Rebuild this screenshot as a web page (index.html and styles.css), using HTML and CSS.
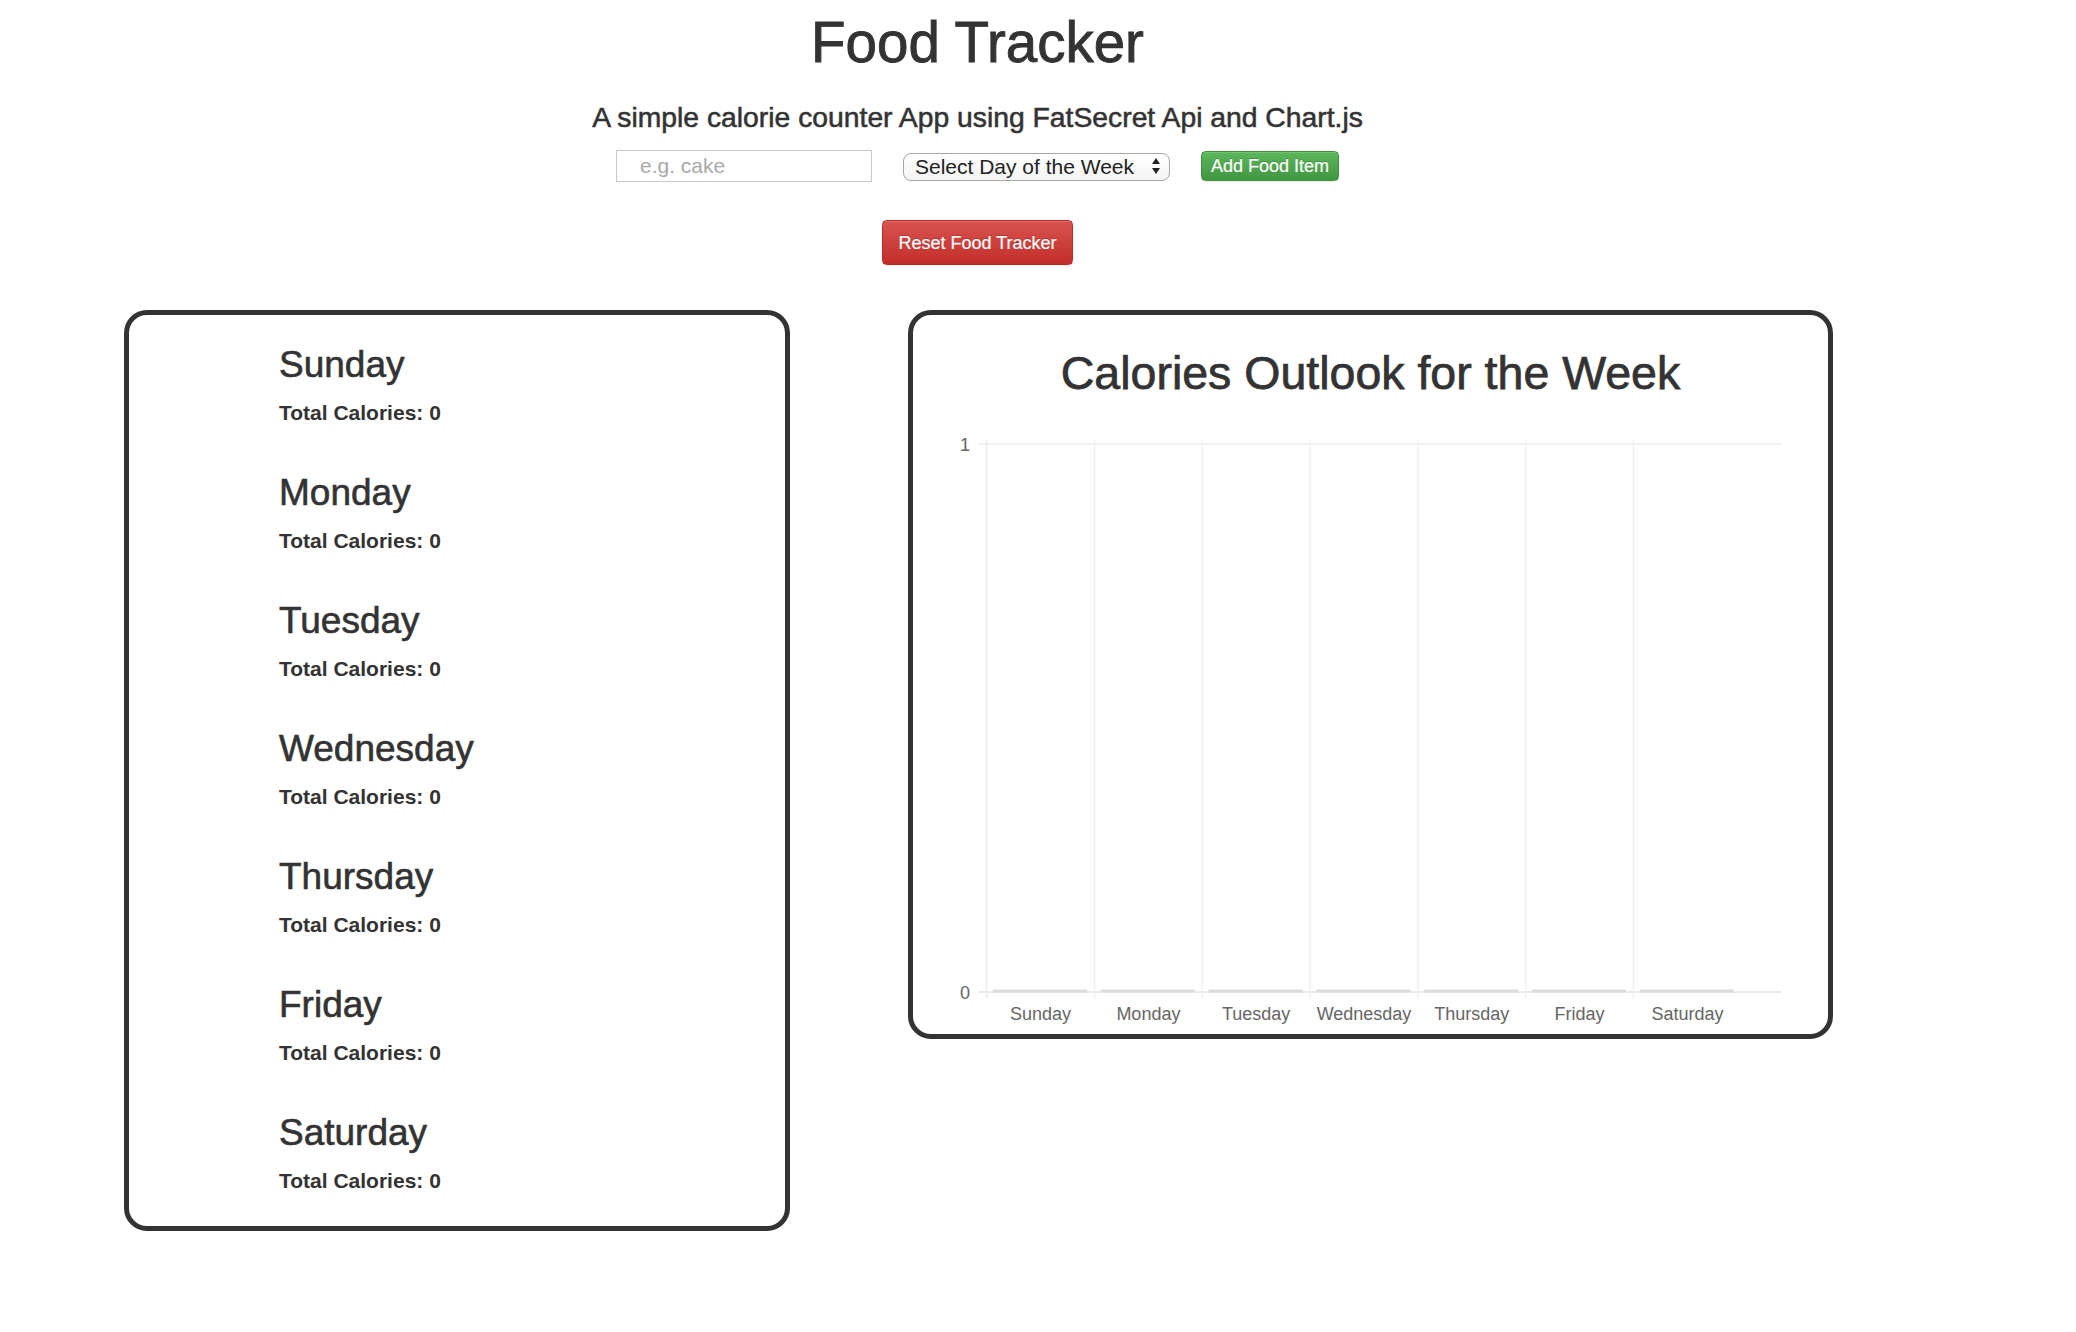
FILE: index.html
```html
<!DOCTYPE html>
<html lang="en">
<head>
<meta charset="utf-8">
<title>Food Tracker</title>
<link rel="stylesheet" href="styles.css">
</head>
<body>
<div class="page">
  <header class="hero">
    <h1 class="title">Food Tracker</h1>
    <h4 class="subtitle">A simple calorie counter App using FatSecret Api and Chart.js</h4>
    <form class="controls">
      <input class="food-input" type="text" placeholder="e.g. cake">
      <label class="day-select">
        <select class="day-select-box">
          <option>Select Day of the Week</option>
          <option>Sunday</option>
          <option>Monday</option>
          <option>Tuesday</option>
          <option>Wednesday</option>
          <option>Thursday</option>
          <option>Friday</option>
          <option>Saturday</option>
        </select>
        <svg class="select-arrows" width="10" height="18" viewBox="0 0 10 18"><path d="M5 1 L9 7 L1 7 Z" fill="#222"/><path d="M1 11 L9 11 L5 17 Z" fill="#222"/></svg>
      </label>
      <button type="button" class="btn btn-success btn-add">Add Food Item</button>
    </form>
    <button type="button" class="btn btn-danger btn-reset">Reset Food Tracker</button>
  </header>

  <main class="panels">
    <section class="panel days-panel">
      <div class="day"><h3 class="day-name">Sunday</h3><p class="day-total"><strong>Total Calories: 0</strong></p></div>
      <div class="day"><h3 class="day-name">Monday</h3><p class="day-total"><strong>Total Calories: 0</strong></p></div>
      <div class="day"><h3 class="day-name">Tuesday</h3><p class="day-total"><strong>Total Calories: 0</strong></p></div>
      <div class="day"><h3 class="day-name">Wednesday</h3><p class="day-total"><strong>Total Calories: 0</strong></p></div>
      <div class="day"><h3 class="day-name">Thursday</h3><p class="day-total"><strong>Total Calories: 0</strong></p></div>
      <div class="day"><h3 class="day-name">Friday</h3><p class="day-total"><strong>Total Calories: 0</strong></p></div>
      <div class="day"><h3 class="day-name">Saturday</h3><p class="day-total"><strong>Total Calories: 0</strong></p></div>
    </section>

    <section class="panel chart-panel">
      <h2 class="chart-title">Calories Outlook for the Week</h2>
      <svg class="chart" width="915" height="636" viewBox="0 0 915 636">
        <g class="grid">
          <line x1="65" y1="46" x2="869" y2="46" stroke="#ededed" stroke-width="1.5"/>
          <line x1="65" y1="594" x2="869" y2="594" stroke="#e4e4e4" stroke-width="1.5"/>
          <line x1="73.7" y1="42" x2="73.7" y2="600" stroke="#ebebeb" stroke-width="1.5"/>
          <line x1="181.5" y1="42" x2="181.5" y2="600" stroke="#f0f0f0" stroke-width="1.5"/>
          <line x1="289.3" y1="42" x2="289.3" y2="600" stroke="#f0f0f0" stroke-width="1.5"/>
          <line x1="397.1" y1="42" x2="397.1" y2="600" stroke="#f0f0f0" stroke-width="1.5"/>
          <line x1="504.9" y1="42" x2="504.9" y2="600" stroke="#f0f0f0" stroke-width="1.5"/>
          <line x1="612.7" y1="42" x2="612.7" y2="600" stroke="#f0f0f0" stroke-width="1.5"/>
          <line x1="720.5" y1="42" x2="720.5" y2="600" stroke="#f0f0f0" stroke-width="1.5"/>
        </g>
        <g class="bars" fill="#dcdcdc">
          <rect x="80" y="591.5" width="94" height="3"/>
          <rect x="187.8" y="591.5" width="94" height="3"/>
          <rect x="295.6" y="591.5" width="94" height="3"/>
          <rect x="403.4" y="591.5" width="94" height="3"/>
          <rect x="511.2" y="591.5" width="94" height="3"/>
          <rect x="619" y="591.5" width="94" height="3"/>
          <rect x="726.8" y="591.5" width="94" height="3"/>
        </g>
        <g class="y-labels" fill="#666" font-family="Liberation Sans, Arial, sans-serif" font-size="18" text-anchor="end">
          <text x="57" y="52.5">1</text>
          <text x="57" y="600.5">0</text>
        </g>
        <g class="x-labels" fill="#666" font-family="Liberation Sans, Arial, sans-serif" font-size="18" text-anchor="middle">
          <text x="127.6" y="621.5">Sunday</text>
          <text x="235.4" y="621.5">Monday</text>
          <text x="343.2" y="621.5">Tuesday</text>
          <text x="451" y="621.5">Wednesday</text>
          <text x="558.8" y="621.5">Thursday</text>
          <text x="666.6" y="621.5">Friday</text>
          <text x="774.4" y="621.5">Saturday</text>
        </g>
      </svg>
    </section>
  </main>
</div>
</body>
</html>
```

FILE: styles.css
```css
* {
  box-sizing: border-box;
}

html, body {
  margin: 0;
  padding: 0;
  background: #fff;
}

body {
  font-family: "Liberation Sans", Arial, Helvetica, sans-serif;
  font-size: 21px;
  line-height: 30px;
  color: #333;
}

.page {
  width: 1755px;
  margin-left: 100px;
}

.hero {
  display: flex;
  flex-direction: column;
  align-items: center;
}

.title {
  margin: 13px 0 0;
  font-size: 56.5px;
  line-height: 60px;
  font-weight: normal;
  color: #333;
  -webkit-text-stroke: 0.9px #333;
}

.subtitle {
  margin: 29px 0 0;
  font-size: 28.3px;
  line-height: 30px;
  font-weight: normal;
  color: #333;
  -webkit-text-stroke: 0.55px #333;
}

.controls {
  display: flex;
  align-items: center;
  gap: 31px;
  margin: 18px 0 0;
}

.food-input {
  width: 256px;
  height: 32px;
  margin: 0;
  padding: 0 0 0 23px;
  border: 1.5px solid #c9c9c9;
  border-radius: 0;
  font-family: "Liberation Sans", Arial, sans-serif;
  font-size: 21px;
  color: #333;
  background: #fff;
  outline: none;
}

.food-input::placeholder {
  color: #a9a9a9;
}

.day-select {
  position: relative;
  display: block;
  width: 267px;
  height: 28px;
}

.day-select-box {
  -webkit-appearance: none;
  appearance: none;
  width: 267px;
  height: 28px;
  margin: 0;
  padding: 0 30px 0 11px;
  border: 1.5px solid #a6a6a6;
  border-radius: 8px;
  background: linear-gradient(to bottom, #ffffff 0%, #f4f4f4 100%);
  font-family: "Liberation Sans", Arial, sans-serif;
  font-size: 21px;
  line-height: 25px;
  color: #222;
  outline: none;
}

.select-arrows {
  position: absolute;
  right: 9px;
  top: 5px;
  pointer-events: none;
}

.btn {
  display: inline-block;
  margin: 0;
  font-family: "Liberation Sans", Arial, sans-serif;
  font-size: 18px;
  font-weight: normal;
  color: #fff;
  text-align: center;
  white-space: nowrap;
  cursor: pointer;
  border-radius: 4.5px;
  text-shadow: 0 -1px 0 rgba(0, 0, 0, 0.2);
  box-shadow: inset 0 1px 0 rgba(255, 255, 255, 0.15), 0 1px 1px rgba(0, 0, 0, 0.075);
  -webkit-text-stroke: 0.2px #fff;
}

.btn-success {
  background: linear-gradient(to bottom, #5cb85c 0%, #419641 100%);
  border: 1.5px solid #3e8f3e;
}

.btn-danger {
  background: linear-gradient(to bottom, #d9534f 0%, #c12e2a 100%);
  border: 1.5px solid #b92c28;
}

.btn-add {
  height: 30px;
  padding: 0 9px;
  line-height: 27px;
}

.btn-reset {
  height: 45px;
  padding: 0 15px;
  line-height: 42px;
  margin-top: 38px;
}

.panels {
  display: flex;
  align-items: flex-start;
  justify-content: space-between;
  margin-top: 45px;
  padding: 0 22px 0 24px;
}

.panel {
  border: 5px solid #333;
  border-radius: 23px;
  background: #fff;
}

.days-panel {
  width: 666px;
  padding: 30px 0 30px 150px;
}

.day + .day {
  margin-top: 45px;
}

.day-name {
  margin: 0;
  font-size: 37px;
  line-height: 40px;
  font-weight: normal;
  color: #333;
  -webkit-text-stroke: 0.6px #333;
}

.day-total {
  margin: 13px 0 0;
  font-size: 21px;
  line-height: 30px;
}

.day-total strong {
  font-weight: bold;
}

.chart-panel {
  width: 925px;
  padding-top: 33px;
}

.chart-title {
  margin: 0;
  font-size: 46.5px;
  line-height: 50px;
  font-weight: normal;
  text-align: center;
  color: #333;
  -webkit-text-stroke: 0.75px #333;
}

.chart {
  display: block;
}
```
